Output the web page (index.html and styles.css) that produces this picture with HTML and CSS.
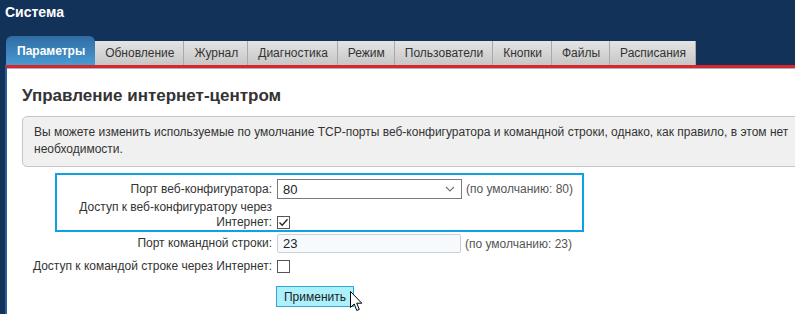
FILE: index.html
```html
<!DOCTYPE html>
<html lang="ru">
<head>
    <meta charset="UTF-8">
    <title>Система</title>
    <link rel="stylesheet" href="styles.css">
</head>
<body>

<div class="header">Система</div>

<div class="tabs">
    <div class="tab active">Параметры</div>
    <div class="tab">Обновление</div>
    <div class="tab">Журнал</div>
    <div class="tab">Диагностика</div>
    <div class="tab">Режим</div>
    <div class="tab">Пользователи</div>
    <div class="tab">Кнопки</div>
    <div class="tab">Файлы</div>
    <div class="tab">Расписания</div>
</div>

<div class="panel">
    <h1 class="title">Управление интернет-центром</h1>

    <div class="info">
        Вы можете изменить используемые по умолчание TCP-порты веб-конфигуратора и командной строки, однако, как правило, в этом нет необходимости.
    </div>

    <div class="form">
        <div class="group">
            <div class="row">
                <label class="label">Порт веб-конфигуратора:</label>
                <div class="select">
                    <span>80</span>
                    <svg width="10" height="6" viewBox="0 0 10 6"><path d="M1 1 L5 5 L9 1" fill="none" stroke="#777" stroke-width="1.2"/></svg>
                </div>
                <span class="hint">(по умолчанию: 80)</span>
            </div>
            <div class="row row-tall">
                <label class="label">Доступ к веб-конфигуратору через<br>Интернет:</label>
                <span class="check">
                    <svg width="11" height="11" viewBox="0 0 11 11"><path d="M1.5 5.5 L4.2 8.3 L9.5 2.2" fill="none" stroke="#222" stroke-width="1.3"/></svg>
                </span>
            </div>
        </div>

        <div class="row row-cli">
            <label class="label">Порт командной строки:</label>
            <input class="text-input" type="text" value="23">
            <span class="hint">(по умолчанию: 23)</span>
        </div>

        <div class="row row-check">
            <label class="label">Доступ к командой строке через Интернет:</label>
            <span class="check"></span>
        </div>

        <div class="actions">
            <button class="apply-btn">Применить</button>
            <svg class="cursor" width="13" height="21" viewBox="0 0 13 21">
                <path d="M0.5 0.5 L0.5 16.5 L4.2 13 L6.8 19.5 L9.3 18.4 L6.7 12.2 L11.8 12.2 Z" fill="#fff" stroke="#000" stroke-width="1"/>
            </svg>
        </div>
    </div>
</div>

</body>
</html>
```

FILE: styles.css
```css
html, body {
    overflow: hidden;
}

body {
    margin: 0;
    padding-left: 5px;
    height: 314px;
    background: #13325a;
    font-family: "Liberation Sans", Arial, sans-serif;
    font-size: 12px;
    color: #333;
}

.header {
    margin-left: -5px;
    padding: 4px 5px 0;
    height: 16px;
    line-height: 16px;
    font-size: 14px;
    font-weight: bold;
    color: #fff;
}

.tabs {
    display: flex;
    align-items: flex-end;
    margin-top: 16px;
    margin-left: 1px;
    height: 29px;
}

.tab {
    height: 24px;
    line-height: 24px;
    padding: 0 9px 0 10px;
    border-right: 1px solid #a9a9a9;
    background: linear-gradient(#e4e4e4, #c6c6c6);
    color: #333;
    white-space: nowrap;
}

.tab.active {
    height: 29px;
    line-height: 31px;
    padding: 0 10px 0 11px;
    border-right: none;
    border-radius: 6px 6px 0 0;
    background: linear-gradient(#2f6ca3, #4a9ad2);
    color: #fff;
    font-weight: bold;
}

.panel {
    width: 900px;
    height: 260px;
    padding-left: 15px;
    border-left: 2px solid #2a5d9c;
    border-top: 3px solid #d4282d;
    box-shadow: inset 0 1px 0 #a9b2bd;
    background: #fff;
}

.title {
    margin: 18px 0 10px;
    height: 20px;
    line-height: 20px;
    font-size: 17px;
    font-weight: bold;
    color: #333;
}

.info {
    width: 790px;
    padding: 7px 11px 8px;
    line-height: 17px;
    background: #f0f0f0;
    border: 1px solid #c6c6c6;
    border-radius: 5px;
    color: #333;
}

.form {
    margin-top: 12px;
}

.group {
    position: relative;
}

.group::before {
    content: "";
    position: absolute;
    left: 33px;
    top: -6px;
    width: 525px;
    bottom: -2px;
    border: 2px solid #0ea2e2;
}

.row {
    display: flex;
    align-items: center;
    gap: 5px;
    height: 20px;
}

.label {
    width: 250px;
    flex-shrink: 0;
    text-align: right;
    line-height: 15px;
}

.row-tall {
    height: 30px;
    margin-top: 1px;
    align-items: flex-end;
}

.row-tall .check {
    margin-bottom: 1px;
}

.row-cli {
    height: 19px;
    margin-top: 4px;
}

.row-check {
    height: 13px;
    margin-top: 7px;
}

.select {
    display: flex;
    align-items: center;
    justify-content: space-between;
    box-sizing: border-box;
    width: 185px;
    height: 20px;
    padding: 0 6px 0 5px;
    border: 1px solid #7a7a7a;
    background: #fff;
    color: #222;
    font-size: 13px;
}

.hint {
    margin-left: -1px;
    color: #555;
    white-space: nowrap;
}

.check {
    display: flex;
    align-items: center;
    justify-content: center;
    box-sizing: border-box;
    width: 13px;
    height: 13px;
    border: 1px solid #555;
    background: #fff;
}

.text-input {
    box-sizing: border-box;
    width: 184px;
    height: 19px;
    margin: 0;
    padding: 0 5px;
    border: 1px solid #c8d0d6;
    border-radius: 2px;
    background: #f6fafd;
    font-family: inherit;
    font-size: 13px;
    color: #222;
}

.actions {
    position: relative;
    margin-top: 13px;
    padding-left: 254px;
    height: 21px;
}

.apply-btn {
    width: 78px;
    height: 21px;
    margin: 0;
    padding: 0;
    border: 1px solid #2ea6d6;
    background: #abf0fb;
    font-family: inherit;
    font-size: 12px;
    color: #222;
}

.cursor {
    position: absolute;
    left: 328px;
    top: 5px;
}
```
